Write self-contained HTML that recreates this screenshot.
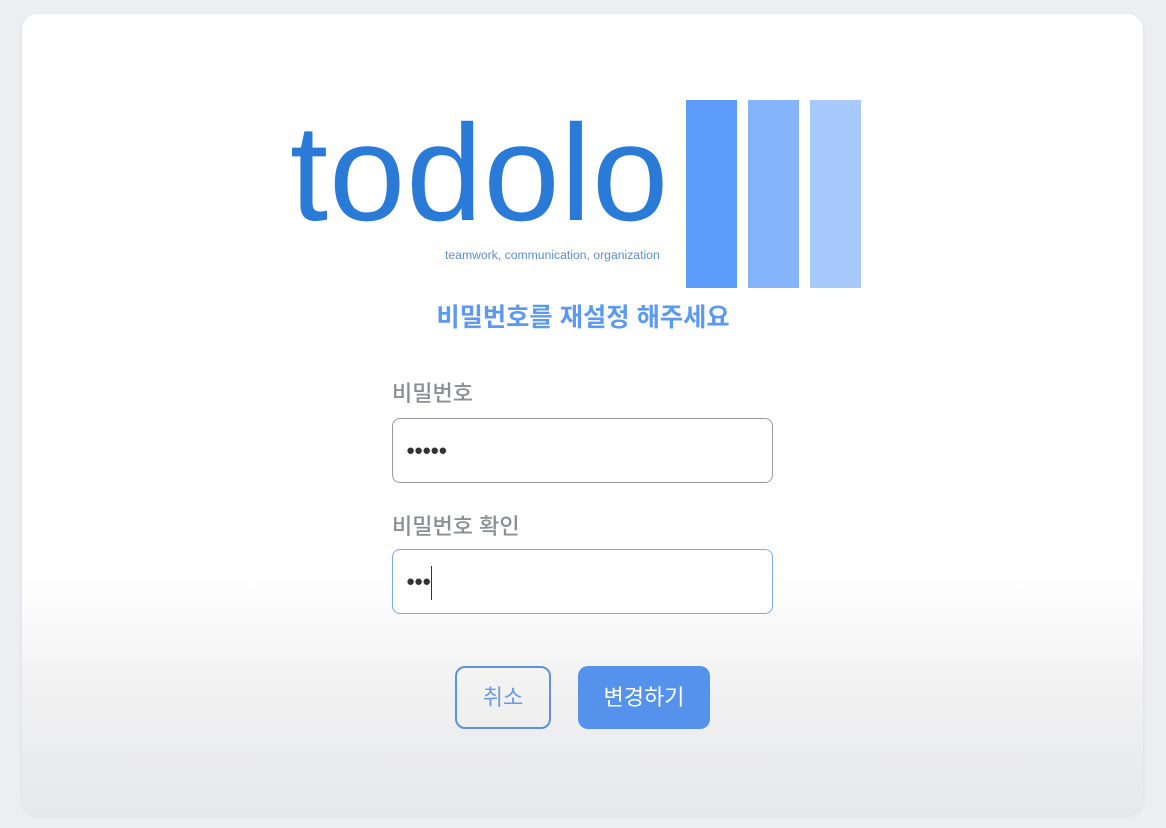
<!DOCTYPE html>
<html><head><meta charset="utf-8"><style>
body{margin:0;width:1166px;height:828px;background:#eceef1;position:relative;overflow:hidden;font-family:"Liberation Sans","Noto Sans CJK KR",sans-serif}
.card{position:absolute;left:22px;top:14px;width:1121px;height:801px;border-radius:16px;background:linear-gradient(#fff 0%,#fff 70%,#f1f1f2 85%,#e7e8ea 100%);box-shadow:0 1px 4px rgba(0,0,0,.08)}
.a{position:absolute}
.logo{left:290px;top:105px;font-size:137px;color:#2a7ad8;line-height:1;letter-spacing:1px}
.bar{top:100px;width:51px;height:188px}
.in{left:392px;width:379px;height:63px;border-radius:8px;background:#fff}
.dots{left:406px;font-size:15px;color:#333;letter-spacing:-1px}
.lbl{left:392px;font-size:22px;color:#8a8f96;font-weight:500}
</style></head><body>
<div class="card"></div>
<div class="a logo">todolo</div>
<div class="a" style="left:445px;top:248px;font-size:12.2px;color:#5a8fd8">teamwork, communication, organization</div>
<div class="a bar" style="left:686px;background:#5b9cf9"></div>
<div class="a bar" style="left:748px;background:#84b3fa"></div>
<div class="a bar" style="left:810px;background:#a8c9fc"></div>
<div class="a" style="left:0;width:1166px;text-align:center;top:298px;font-size:25.3px;font-weight:bold;color:#5b9af0">비밀번호를 재설정 해주세요</div>
<div class="a lbl" style="top:376px">비밀번호</div>
<div class="a in" style="top:418px;border:1px solid #9a9a9a"></div>
<div class="a dots" style="top:442px">●●●●●</div>
<div class="a lbl" style="top:509px">비밀번호 확인</div>
<div class="a in" style="top:549px;border:1px solid #7aa8ec"></div>
<div class="a dots" style="top:573px">●●●</div>
<div class="a" style="left:431px;top:566px;width:1px;height:34px;background:#333"></div>
<div class="a" style="left:455px;top:666px;width:92px;height:59px;border:2px solid #5b93e0;border-radius:10px;color:#6b9ae0;font-size:22px;text-align:center;line-height:59px">취소</div>
<div class="a" style="left:578px;top:666px;width:132px;height:63px;background:#5592ec;border-radius:10px;color:#fff;font-size:22px;text-align:center;line-height:63px">변경하기</div>
</body></html>
